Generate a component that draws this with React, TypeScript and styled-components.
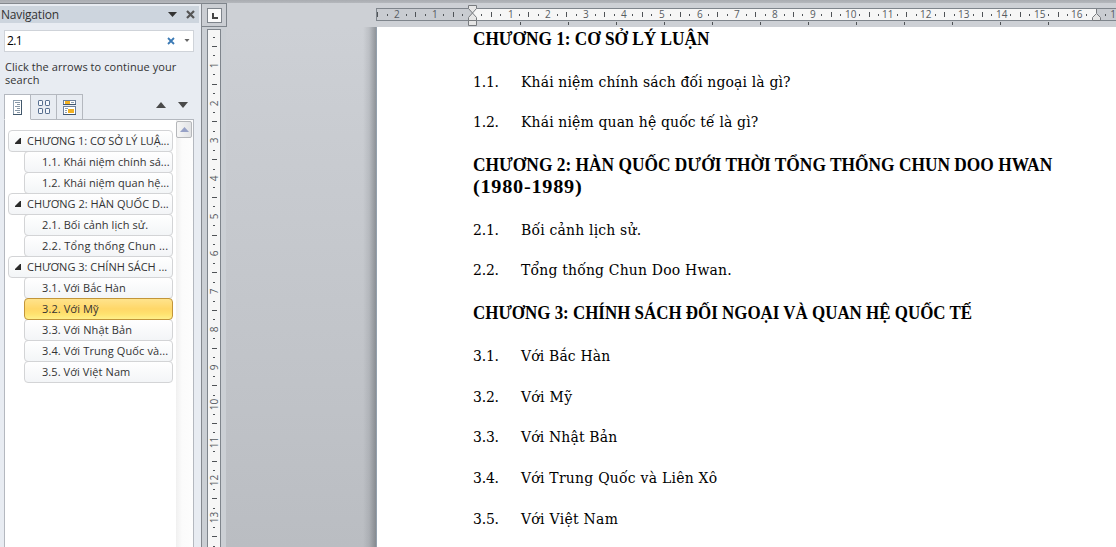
import React from "react";
import styled, { createGlobalStyle, css } from "styled-components";

const GlobalStyle = createGlobalStyle`
  * { box-sizing: border-box; }
  html, body { margin: 0; padding: 0; overflow: hidden; }
  body { font-family: "Open Sans", "Noto Sans", sans-serif; color: #333; }
`;

const Window = styled.div`
  display: flex;
  flex-direction: column;
  width: 1116px;
  height: 547px;
  overflow: hidden;
  background: #cdd0d5;
`;

const RibbonEdge = styled.div`
  flex: none;
  height: 3px;
  background: linear-gradient(#a9acb1, #b4b7bc);
`;

const Workspace = styled.div`
  flex: 1;
  min-height: 0;
  display: flex;
`;

/* Navigation pane */

const Pane = styled.aside`
  flex: none;
  width: 202px;
  display: flex;
  flex-direction: column;
  background: #e8ecf2;
  border-top: 1px solid #84888e;
  border-right: 1px solid #84888e;
`;

const PaneHeader = styled.header`
  display: flex;
  align-items: center;
  width: 199px;
  height: 17px;
  margin-top: 2px;
  padding: 0 4px 0 1px;
  background: #cdd5de;
`;

const PaneTitle = styled.h1`
  flex: 1;
  margin: 0;
  font-size: 12px;
  font-weight: 400;
  line-height: 18px;
  letter-spacing: -0.18px;
`;

const HeaderIcons = styled.div`
  display: flex;
  align-items: center;
  gap: 9px;
`;

const SearchBox = styled.div`
  display: flex;
  align-items: center;
  width: 190px;
  height: 22px;
  margin: 7px 0 0 4px;
  padding: 0 3px 0 2px;
  background: #fff;
  border: 1px solid #cfd3d9;
`;

const SearchText = styled.span`
  flex: 1;
  color: #000;
  font-size: 12px;
  line-height: 20px;
  letter-spacing: -0.6px;
`;

const SearchIcons = styled.div`
  display: flex;
  align-items: center;
  gap: 9px;
`;

const Hint = styled.p`
  margin: 8px 0 0 5px;
  width: 185px;
  height: 27px;
  font-size: 11px;
  line-height: 13px;
  letter-spacing: 0.07px;
  white-space: nowrap;
`;

const TabBar = styled.div`
  display: flex;
  align-items: flex-end;
  height: 26px;
  margin: 7px 0 0 4px;
  width: 190px;
`;

const Tab = styled.div<{ $active?: boolean }>`
  display: flex;
  align-items: center;
  justify-content: center;
  width: 26px;
  height: 26px;
  border: 1px solid #b4b8bf;
  border-left-width: ${(p) => (p.$active ? "1px" : "0")};
  ${(p) =>
    p.$active &&
    css`
      width: 27px;
      background: #fff;
      border-bottom-color: #fff;
    `}
`;

const TabFiller = styled.div`
  flex: 1;
  display: flex;
  justify-content: flex-end;
  align-items: center;
  gap: 12px;
  height: 26px;
  padding: 0 6px 4px 0;
  border-bottom: 1px solid #b4b8bf;
`;

const Outline = styled.div`
  flex: 1;
  display: flex;
  width: 190px;
  margin-left: 4px;
  border: solid #b4b8bf;
  border-width: 0 1px;
  background: #fff;
`;

const OutlineList = styled.ul`
  flex: 1;
  min-width: 0;
  margin: 0;
  padding: 10px 3px 0 3px;
  list-style: none;
`;

const OutlineItem = styled.li<{ $level: 1 | 2; $selected?: boolean }>`
  position: relative;
  display: flex;
  align-items: center;
  height: 22px;
  margin-bottom: -1px;
  margin-left: ${(p) => (p.$level === 1 ? 0 : 16)}px;
  padding-left: ${(p) => (p.$level === 1 ? 6 : 17)}px;
  border: 1px solid #d3d4d6;
  border-radius: 4px;
  background: linear-gradient(#ffffff, #f3f5f7);
  font-size: 11px;
  line-height: 20px;
  white-space: nowrap;
  ${(p) =>
    p.$selected &&
    css`
      z-index: 1;
      border-color: #c2953a;
      background: linear-gradient(#ffe38c 0%, #ffd768 50%, #ffe26f 75%, #fff08a 100%);
    `}
`;

const ItemLabel = styled.span<{ $tracking: number }>`
  letter-spacing: ${(p) => p.$tracking}px;
`;

const Expander = styled.svg`
  flex: none;
  margin-right: 6px;
`;

const ScrollTrack = styled.div`
  width: 17px;
  padding-top: 1px;
  background: linear-gradient(90deg, #f0f0f0, #fbfbfb 35%, #fdfdfd);
`;

const ScrollButton = styled.div`
  display: flex;
  align-items: center;
  justify-content: center;
  width: 16px;
  height: 17px;
  border: 1px solid #b5b7ba;
  border-radius: 2px;
  background: linear-gradient(90deg, #f6f6f6, #e2e3e5);
`;

/* Rulers */

const RulerColumn = styled.div`
  flex: none;
  width: 24px;
  display: flex;
  flex-direction: column;
  background: #cbcfd4;
`;

const TabSelector = styled.div`
  flex: none;
  display: flex;
  align-items: center;
  justify-content: center;
  width: 25px;
  height: 24px;
  border: 1px solid #7f858c;
  border-left: 0;
  background: #cbced3;
`;

const TabStop = styled.div`
  display: flex;
  align-items: center;
  justify-content: center;
  width: 15px;
  height: 15px;
  padding: 2px 0 0 1px;
  border: 1px solid #7f858c;
  background: #fafafa;
`;

const VerticalRuler = styled.div`
  flex: 1;
  width: 14px;
  min-height: 0;
  margin: 2px 0 0 5px;
  border: 1px solid #7f858c;
  border-bottom: 0;
  background: #f6f6f6;
  overflow: hidden;
`;

const Editor = styled.main`
  flex: 1;
  min-width: 0;
  display: flex;
  flex-direction: column;
`;

const RulerRow = styled.div`
  flex: none;
  height: 24px;
  padding-left: 150px;
`;

const Drawing = styled.svg`
  display: block;
  shape-rendering: crispEdges;
`;

const RulerText = styled.text`
  font-family: "Open Sans", sans-serif;
  font-size: 10px;
  fill: #565b61;
  text-anchor: middle;
`;

/* Document */

const Desk = styled.div`
  flex: 1;
  min-height: 0;
  display: flex;
  background: linear-gradient(#cdd0d5, #babdc2);
`;

const DeskShade = styled.div`
  flex: none;
  width: 151px;
  border-right: 1px solid #93a0ad;
  background: linear-gradient(90deg, transparent 137px, rgba(70, 76, 82, 0.12) 143px, rgba(70, 76, 82, 0.45) 150px);
`;

const Page = styled.article`
  flex: 1;
  padding: 2px 0 0 96px;
  background: #fff;
  color: #000;
  font-family: "DejaVu Serif Condensed", "DejaVu Serif", serif;
  font-stretch: condensed;
`;

const Heading = styled.h2<{ $top: number; $tracking: number; $stretch?: number }>`
  margin: ${(p) => p.$top}px 0 0;
  width: max-content;
  height: 22px;
  font-family: "Liberation Serif", serif;
  font-size: 19.5px;
  font-weight: 700;
  line-height: 20px;
  letter-spacing: ${(p) => p.$tracking}px;
  white-space: nowrap;
  transform: scaleX(${(p) => p.$stretch ?? 1});
  transform-origin: left;
`;

const Entry = styled.p<{ $top: number; $tracking: number }>`
  display: flex;
  margin: ${(p) => p.$top}px 0 0;
  height: 22px;
  font-size: 15.5px;
  line-height: 22px;
  letter-spacing: ${(p) => p.$tracking}px;
  white-space: nowrap;
`;

const EntryNumber = styled.span`
  width: 48px;
  letter-spacing: -0.2px;
`;

type OutlineEntry = { label: string; level: 1 | 2; tracking: number; selected?: boolean };

const outline: OutlineEntry[] = [
  { label: "CHƯƠNG 1: CƠ SỞ LÝ LUẬ...", level: 1, tracking: -0.04 },
  { label: "1.1. Khái niệm chính sá...", level: 2, tracking: 0.05 },
  { label: "1.2. Khái niệm quan hệ...", level: 2, tracking: 0.05 },
  { label: "CHƯƠNG 2: HÀN QUỐC D...", level: 1, tracking: 0.03 },
  { label: "2.1. Bối cảnh lịch sử.", level: 2, tracking: 0.09 },
  { label: "2.2. Tổng thống Chun ...", level: 2, tracking: 0.22 },
  { label: "CHƯƠNG 3: CHÍNH SÁCH ...", level: 1, tracking: 0 },
  { label: "3.1. Với Bắc Hàn", level: 2, tracking: 0.09 },
  { label: "3.2. Với Mỹ", level: 2, tracking: 0.1, selected: true },
  { label: "3.3. Với Nhật Bản", level: 2, tracking: 0.12 },
  { label: "3.4. Với Trung Quốc và...", level: 2, tracking: 0.12 },
  { label: "3.5. Với Việt Nam", level: 2, tracking: 0.08 },
];

type Line = { num?: string; text: string; top: number; tracking: number; stretch?: number };

const lines: Line[] = [
  { text: "CHƯƠNG 1: CƠ SỞ LÝ LUẬN", top: 0, tracking: 0, stretch: 0.884 },
  { num: "1.1.", text: "Khái niệm chính sách đối ngoại là gì?", top: 20, tracking: 0.15 },
  { num: "1.2.", text: "Khái niệm quan hệ quốc tế là gì?", top: 18, tracking: 0.15 },
  { text: "CHƯƠNG 2: HÀN QUỐC DƯỚI THỜI TỔNG THỐNG CHUN DOO HWAN", top: 22, tracking: 0, stretch: 0.89 },
  { text: "(1980-1989)", top: 0, tracking: 0.7, stretch: 1.04 },
  { num: "2.1.", text: "Bối cảnh lịch sử.", top: 20, tracking: 0.2 },
  { num: "2.2.", text: "Tổng thống Chun Doo Hwan.", top: 18, tracking: 0.2 },
  { text: "CHƯƠNG 3: CHÍNH SÁCH ĐỐI NGOẠI VÀ QUAN HỆ QUỐC TẾ", top: 22, tracking: 0, stretch: 0.868 },
  { num: "3.1.", text: "Với Bắc Hàn", top: 20, tracking: 0.16 },
  { num: "3.2.", text: "Với Mỹ", top: 19, tracking: 0.3 },
  { num: "3.3.", text: "Với Nhật Bản", top: 18, tracking: 0.16 },
  { num: "3.4.", text: "Với Trung Quốc và Liên Xô", top: 19, tracking: 0.25 },
  { num: "3.5.", text: "Với Việt Nam", top: 19, tracking: 0.3 },
];

const CM = 37.79;

function HorizontalRuler() {
  const origin = 96;
  const marks: React.ReactNode[] = [];
  for (let q = -10; q <= 67; q++) {
    const x = Math.round(origin + (q * CM) / 4 - 0.2);
    if (q === 0 || q === 66) continue;
    if (q % 4 === 0) {
      marks.push(<RulerText key={q} x={x + 0.8} y={14.5}>{Math.abs(q / 4)}</RulerText>);
    } else if (q % 2 === 0) {
      marks.push(<rect key={q} x={x} y={9} width={1} height={5} fill="#4f5357" />);
    } else {
      marks.push(<rect key={q} x={x} y={11} width={1} height={2} fill="#4f5357" />);
    }
  }
  marks.push(<RulerText key="edge" x={740} y={14.5}>17</RulerText>);
  const stops = Array.from({ length: 12 }, (_, i) => 144 + i * 48);
  return (
    <Drawing width={740} height={24} viewBox="0 0 740 24">
      <rect x={0} y={5} width={740} height={13} fill="#7f858c" />
      <rect x={1} y={6} width={740} height={11} fill="#c9ccd1" />
      <rect x={96} y={6} width={624} height={11} fill="#f6f6f6" />
      {marks}
      {stops.map((x) => (
        <rect key={x} x={x} y={19} width={1} height={3} fill="#4f5357" />
      ))}
      <g fill="#e6e6e6" stroke="#777a7e" shapeRendering="geometricPrecision">
        <path d="M92.500 2.500h8v3l-4 4.500-4-4.500z" />
        <path d="M96.500 10l4 4.500v3h-8v-3z" />
        <path d="M92.500 17.500h8v5h-8z" />
        <path d="M720.500 10.500l4 4v3h-8v-3z" />
        <path d="M720.500 6v4" />
      </g>
    </Drawing>
  );
}

function VerticalScale() {
  const marks: React.ReactNode[] = [];
  for (let q = 1; q <= 55; q++) {
    const y = Math.round((q * 37.7) / 4 - 2.8);
    if (q % 4 === 0) {
      marks.push(
        <RulerText key={q} transform={`translate(10 ${y + 0.5}) rotate(-90)`}>
          {q / 4}
        </RulerText>
      );
    } else if (q % 2 === 0) {
      marks.push(<rect key={q} x={4} y={y} width={5} height={1} fill="#4f5357" />);
    } else {
      marks.push(<rect key={q} x={5} y={y} width={2} height={1} fill="#4f5357" />);
    }
  }
  return (
    <Drawing width={12} height={518} viewBox="0 0 12 518">
      {marks}
    </Drawing>
  );
}

function OutlineTabIcon() {
  return (
    <Drawing width={11} height={15} viewBox="0 0 11 15">
      <rect x={1} y={0} width={9} height={15} fill="#41576b" />
      <rect x={1} y={0} width={8} height={14} fill="#8fa0b0" />
      <rect x={2} y={1} width={7} height={13} fill="#fff" />
      <path d="M3 2.500h5M5 4.500h3M3 6.500h5M5 8.500h3M3 10.500h5M5 12.500h3" stroke="#8797a6" />
    </Drawing>
  );
}

function PagesTabIcon() {
  return (
    <svg width={12} height={14} viewBox="0 0 12 14" fill="#f5f8fd" stroke="#546c8d">
      <rect x={0.5} y={0.5} width={4} height={5} rx={0.6} />
      <rect x={7.500} y={0.5} width={4} height={5} rx={0.6} />
      <rect x={0.5} y={8.500} width={4} height={5} rx={0.6} />
      <rect x={7.500} y={8.500} width={4} height={5} rx={0.6} />
    </svg>
  );
}

function ResultsTabIcon() {
  return (
    <Drawing width={13} height={15} viewBox="0 0 13 15">
      <rect x={0} y={0} width={13} height={5} fill="#6d819c" />
      <rect x={0} y={4} width={13} height={1} fill="#3f566f" />
      <rect x={1} y={1} width={11} height={3} fill="#fff" />
      <rect x={2} y={1} width={5} height={3} fill="#f2b021" />
      <path d="M8 2.500h3" stroke="#8d9db0" />
      <rect x={0} y={6} width={13} height={9} fill="#6d819c" />
      <rect x={0} y={14} width={13} height={1} fill="#3f566f" />
      <rect x={1} y={7} width={11} height={7} fill="#fff" />
      <rect x={5} y={9} width={6} height={4} fill="#f2b021" />
      <path d="M2 8.500h3M2 10.500h2M2 12.500h2" stroke="#8d9db0" />
    </Drawing>
  );
}

export default function App() {
  return (
    <Window>
      <GlobalStyle />
      <RibbonEdge />
      <Workspace>
        <Pane>
          <PaneHeader>
            <PaneTitle>Navigation</PaneTitle>
            <HeaderIcons>
              <svg width={9} height={5} viewBox="0 0 9 5"><path d="M0 0h9L4.500 5z" fill="#333" /></svg>
              <svg width={9} height={9} viewBox="0 0 9 9"><path d="M1 1l7 7M8 1L1 8" stroke="#555" strokeWidth={2.2} /></svg>
            </HeaderIcons>
          </PaneHeader>
          <SearchBox>
            <SearchText>2.1</SearchText>
            <SearchIcons>
              <svg width={8} height={8} viewBox="0 0 8 8"><path d="M1 1l6 6M7 1L1 7" stroke="#3b7ab5" strokeWidth={1.8} /></svg>
              <svg width={6} height={4} viewBox="0 0 6 4"><path d="M0.500 0h5L3 3z" fill="#666" /></svg>
            </SearchIcons>
          </SearchBox>
          <Hint>
            Click the arrows to continue your
            <br />
            search
          </Hint>
          <TabBar>
            <Tab $active><OutlineTabIcon /></Tab>
            <Tab><PagesTabIcon /></Tab>
            <Tab><ResultsTabIcon /></Tab>
            <TabFiller>
              <svg width={10} height={6} viewBox="0 0 10 6"><path d="M5 0l5 6H0z" fill="#4a4a4a" /></svg>
              <svg width={10} height={6} viewBox="0 0 10 6"><path d="M0 0h10L5 6z" fill="#4a4a4a" /></svg>
            </TabFiller>
          </TabBar>
          <Outline>
            <OutlineList>
              {outline.map((item) => (
                <OutlineItem key={item.label} $level={item.level} $selected={item.selected}>
                  {item.level === 1 && (
                    <Expander width={6} height={6} viewBox="0 0 6 6"><path d="M5 0h1v6H0v-1z" fill="#2a2a2a" /></Expander>
                  )}
                  <ItemLabel $tracking={item.tracking}>{item.label}</ItemLabel>
                </OutlineItem>
              ))}
            </OutlineList>
            <ScrollTrack>
              <ScrollButton>
                <svg width={9} height={5} viewBox="0 0 9 5"><path d="M4.500 0L9 5H0z" fill="#97a1c6" /></svg>
              </ScrollButton>
            </ScrollTrack>
          </Outline>
        </Pane>
        <RulerColumn>
          <TabSelector>
            <TabStop>
              <svg width={6} height={6} viewBox="0 0 6 6"><path d="M1 0v5h5" fill="none" stroke="#444" strokeWidth={2} /></svg>
            </TabStop>
          </TabSelector>
          <VerticalRuler>
            <VerticalScale />
          </VerticalRuler>
        </RulerColumn>
        <Editor>
          <RulerRow>
            <HorizontalRuler />
          </RulerRow>
          <Desk>
            <DeskShade />
            <Page>
              {lines.map((line) =>
                line.num ? (
                  <Entry key={line.text} $top={line.top} $tracking={line.tracking}>
                    <EntryNumber>{line.num}</EntryNumber>
                    <span>{line.text}</span>
                  </Entry>
                ) : (
                  <Heading key={line.text} $top={line.top} $tracking={line.tracking} $stretch={line.stretch}>
                    {line.text}
                  </Heading>
                )
              )}
            </Page>
          </Desk>
        </Editor>
      </Workspace>
    </Window>
  );
}
